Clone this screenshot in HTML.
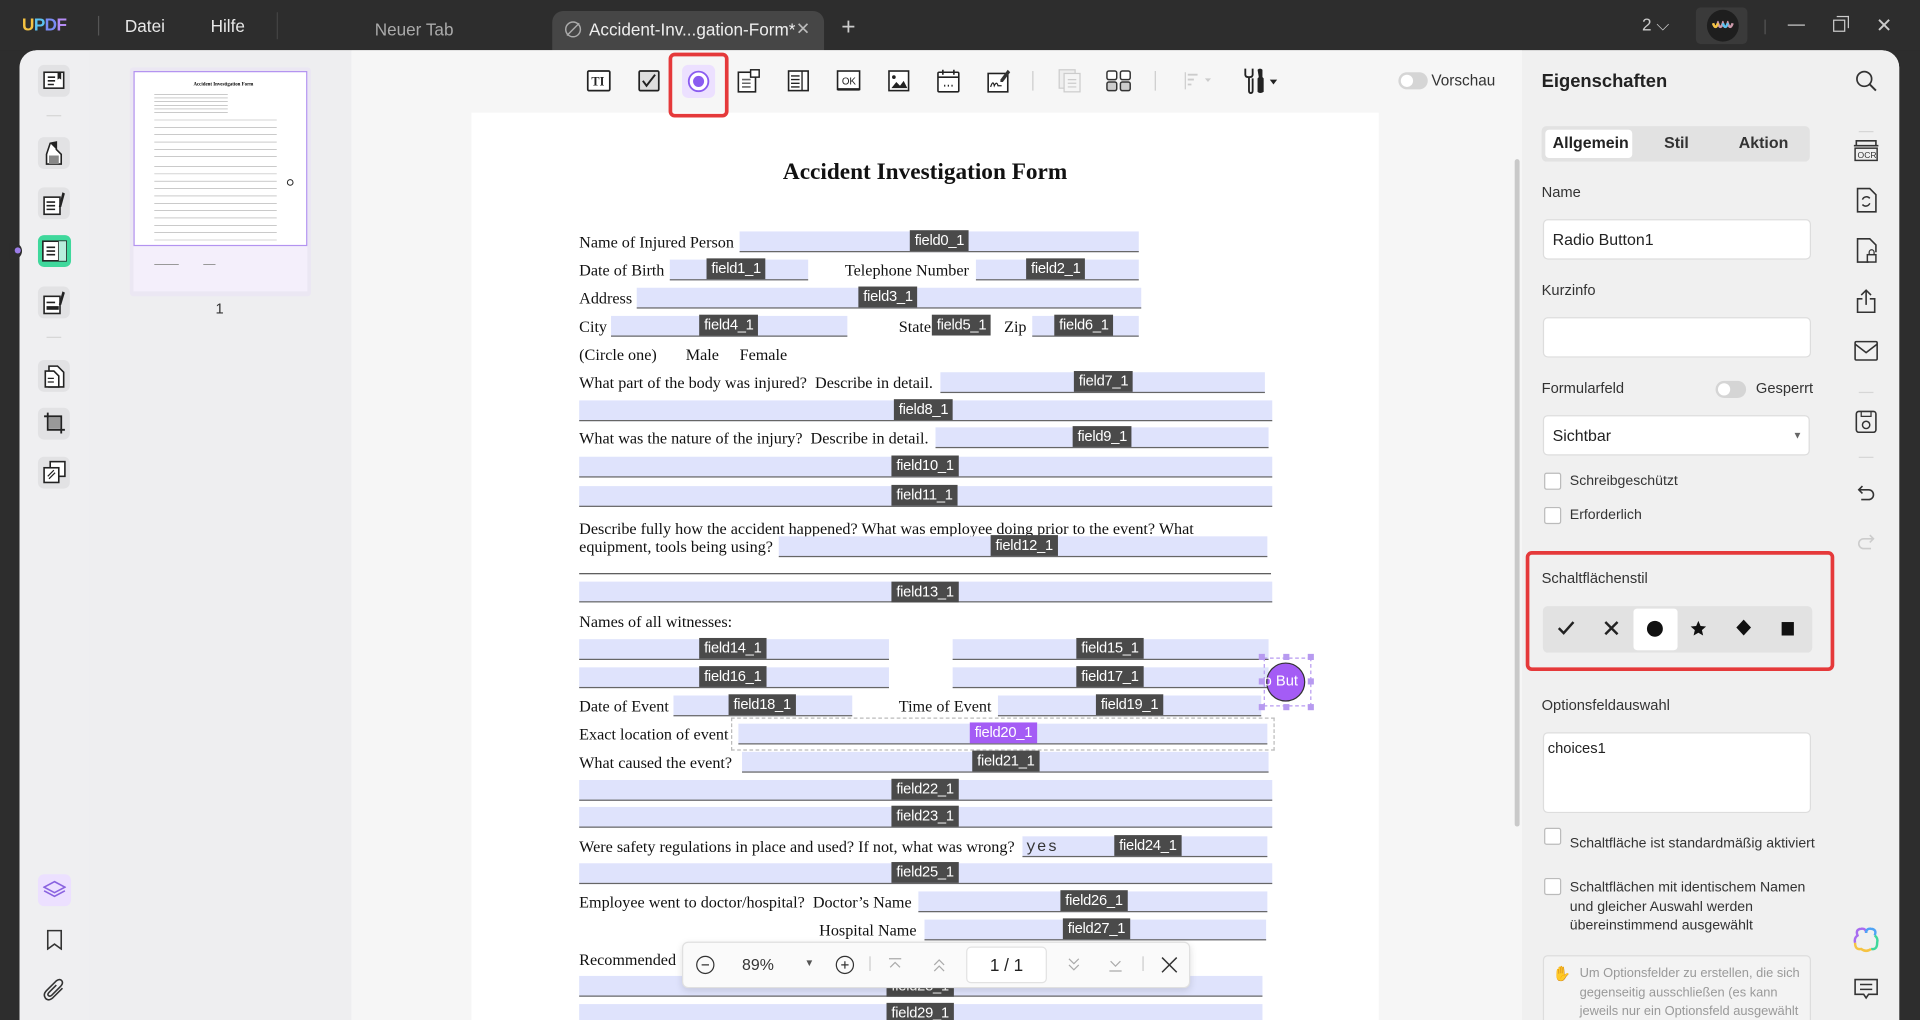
<!DOCTYPE html>
<html><head><meta charset="utf-8">
<style>
*{margin:0;padding:0;box-sizing:border-box}
html,body{width:1920px;height:1020px;overflow:hidden;background:#2d2d2d}
#w{position:absolute;left:0;top:0;width:1568px;height:833px;transform:scale(1.22449);transform-origin:0 0;font-family:"Liberation Sans","DejaVu Sans",sans-serif;overflow:hidden}
.a{position:absolute}
.tb{color:#e8e8e8;font-size:14px}
.f{position:absolute;height:17px;background:#dfe3fc;border-bottom:1px solid #666}
.l{position:absolute;height:17px;background:#4a4a4a;color:#fff;font-size:12px;line-height:17px;padding:0 4px;font-family:"Liberation Sans",sans-serif;letter-spacing:-0.2px}
.t{position:absolute;font-family:"Liberation Serif",serif;font-size:13.2px;line-height:16px;color:#111;white-space:nowrap}
.lb{position:absolute;font-size:12px;color:#333}
.cb{position:absolute;width:14px;height:14px;border:1px solid #bbb;border-radius:2px;background:#fff}
.inp{position:absolute;background:#fff;border:1px solid #ddd;border-radius:4px}
.li{position:absolute;left:31px;width:26px;height:26px;border-radius:5px;background:#e2e2e4}
.sep{position:absolute;background:#d6d6d6}
</style></head><body>
<div id="w">
<!-- title bar -->
<div class="a" style="left:0;top:0;width:1568px;height:41px;background:#2d2d2d"></div>
<div class="a" style="left:18px;top:12px;font-size:14px;font-weight:bold;letter-spacing:-0.5px"><span style="color:#f5c342">U</span><span style="color:#5cc1f0">P</span><span style="color:#7a8cf5">D</span><span style="color:#b58cf5">F</span></div>
<div class="a" style="left:80px;top:13px;width:1px;height:16px;background:#555"></div>
<div class="a tb" style="left:102px;top:13px">Datei</div>
<div class="a tb" style="left:172px;top:13px">Hilfe</div>
<div class="a" style="left:226px;top:10px;width:1px;height:22px;background:#444"></div>
<div class="a tb" style="left:306px;top:16px;color:#aaa">Neuer Tab</div>
<div class="a" style="left:451px;top:9px;width:222px;height:33px;background:#464646;border-radius:9px 9px 0 0"></div>
<svg class="a" style="left:460px;top:16px" width="16" height="16" viewBox="0 0 16 16"><circle cx="8" cy="8" r="6" fill="none" stroke="#aaa" stroke-width="1.2"/><path d="M3 13 L13 3" stroke="#aaa" stroke-width="1.2"/></svg>
<div class="a tb" style="left:481px;top:16px;color:#eee">Accident-Inv...gation-Form*</div>
<div class="a tb" style="left:650px;top:15px;color:#bbb">✕</div>
<div class="a" style="left:687px;top:11px;color:#ccc;font-size:20px">+</div>
<div class="a tb" style="left:1341px;top:12px;color:#ccc">2 ⌵</div>
<div class="a" style="left:1385px;top:6px;width:42px;height:30px;background:#3a3a3a;border-radius:4px"></div>
<div class="a" style="left:1394px;top:8px;width:26px;height:26px;background:#1e1e1e;border-radius:50%"></div>
<svg class="a" style="left:1398px;top:17px" width="18" height="8" viewBox="0 0 18 8"><path d="M1 2 Q3 8 5 2 Q7 8 9 2 Q11 8 13 2 Q15 8 17 2" fill="none" stroke="#c9a" stroke-width="2"/><path d="M1 2 Q3 8 5 2" fill="none" stroke="#f5c342" stroke-width="2"/><path d="M9 2 Q11 8 13 2" fill="none" stroke="#5cc1f0" stroke-width="2"/></svg>
<div class="a" style="left:1441px;top:16px;width:1px;height:12px;background:#555"></div>
<div class="a" style="left:1460px;top:20px;width:14px;height:1px;background:#ccc"></div>
<div class="a" style="left:1497px;top:16px;width:10px;height:10px;border:1px solid #ccc"></div>
<div class="a" style="left:1500px;top:13px;width:10px;height:10px;border-top:1px solid #ccc;border-right:1px solid #ccc"></div>
<div class="a tb" style="left:1532px;top:11px;color:#ccc;font-size:16px">✕</div>

<!-- main background -->
<div class="a" style="left:16px;top:41px;width:1535px;height:800px;background:#f3f3f3;border-radius:14px 14px 0 0"></div>
<div class="a" style="left:16px;top:41px;width:57px;height:800px;background:#efeff1;border-radius:14px 0 0 0"></div>
<div class="a" style="left:73px;top:41px;width:214px;height:800px;background:#eeeef0"></div>
<div class="a" style="left:287px;top:41px;width:956px;height:800px;background:#f6f6f6"></div>
<div class="a" style="left:1243px;top:41px;width:308px;height:800px;background:#f0f0f0;border-radius:0 14px 0 0"></div>
<div class="a" style="left:1237px;top:130px;width:4px;height:545px;background:#c9c9c9;border-radius:2px"></div>

<!-- left icons -->
<div class="a" style="left:8px;top:198px;width:10px;height:14px;background:#2d2d2d;border-radius:0 7px 7px 0"></div>
<div class="a" style="left:12px;top:202px;width:5px;height:5px;background:#9b7ce8;border-radius:50%"></div>
<div class="li" style="top:53px"></div>
<svg class="a" style="left:35px;top:57px" width="18" height="18" viewBox="0 0 18 18"><rect x="1" y="2" width="16" height="13" fill="#fff" stroke="#222" stroke-width="1.3"/><path d="M4 6h6M4 9h6M4 12h5" stroke="#222" stroke-width="1.3"/><path d="M12 2v6l1.5-1 1.5 1V2" fill="#222"/></svg>
<div class="sep" style="left:38px;top:94px;width:12px;height:1px"></div>
<div class="li" style="top:112px"></div>
<svg class="a" style="left:35px;top:115px" width="18" height="20" viewBox="0 0 18 20"><path d="M6 2 L11 1 L11 7 L15 11 L15 19 L3 19 L3 11 Z" fill="#fff" stroke="#222" stroke-width="1.3"/><path d="M6 2 L11 1 L11 7 Z" fill="#222"/><rect x="5" y="12" width="8" height="7" fill="#888"/></svg>
<div class="li" style="top:153px"></div>
<svg class="a" style="left:35px;top:156px" width="19" height="20" viewBox="0 0 19 20"><rect x="1" y="5" width="13" height="14" fill="#fff" stroke="#222" stroke-width="1.3"/><path d="M3 9h7M3 12h7M3 15h7" stroke="#222" stroke-width="1.3"/><path d="M16 1 L13 13 L15 13 L18 2Z" fill="#222"/></svg>
<div class="a" style="left:31px;top:192px;width:27px;height:26px;border-radius:5px;background:#3fd89c"></div>
<svg class="a" style="left:34px;top:196px" width="21" height="18" viewBox="0 0 21 18"><rect x="1" y="1" width="19" height="16" fill="#fff" stroke="#222" stroke-width="1.3"/><path d="M14 1v16" stroke="#222" stroke-width="1.3"/><rect x="14" y="1" width="6" height="16" fill="#b8eedc"/><path d="M4 6h7M4 9h7M4 12h7" stroke="#222" stroke-width="1.3"/></svg>
<div class="li" style="top:234px"></div>
<svg class="a" style="left:35px;top:237px" width="19" height="20" viewBox="0 0 19 20"><rect x="1" y="5" width="13" height="14" fill="#fff" stroke="#222" stroke-width="1.3"/><path d="M3 10h7" stroke="#222" stroke-width="1.3"/><rect x="3" y="13" width="10" height="3" fill="#222"/><path d="M16 1 L13 12 L15 12 L18 2Z" fill="#222"/></svg>
<div class="sep" style="left:38px;top:275px;width:12px;height:1px"></div>
<div class="li" style="top:294px"></div>
<svg class="a" style="left:35px;top:297px" width="19" height="20" viewBox="0 0 19 20"><path d="M5 2h7l5 5v12H5z" fill="#fff" stroke="#222" stroke-width="1.3"/><path d="M2 6h7l4 4v9H2z" fill="#fff" stroke="#222" stroke-width="1.3"/><path d="M4 12h5M4 15h5" stroke="#222"/></svg>
<div class="li" style="top:333px"></div>
<svg class="a" style="left:35px;top:336px" width="19" height="20" viewBox="0 0 19 20"><path d="M4 1v14h14M1 4h14v14" fill="none" stroke="#222" stroke-width="1.5"/><rect x="5" y="5" width="9" height="9" fill="#999"/></svg>
<div class="li" style="top:373px"></div>
<svg class="a" style="left:35px;top:376px" width="19" height="20" viewBox="0 0 19 20"><rect x="6" y="1" width="12" height="12" fill="#fff" stroke="#222" stroke-width="1.3"/><rect x="1" y="6" width="12" height="12" fill="#fff" stroke="#222" stroke-width="1.3"/><path d="M4 13l5-5M5 15l5-5" stroke="#222"/></svg>
<div class="a" style="left:31px;top:714px;width:27px;height:26px;border-radius:5px;background:#ece0ff"></div>
<svg class="a" style="left:35px;top:718px" width="19" height="18" viewBox="0 0 19 18"><path d="M9.5 2 L18 6.5 L9.5 11 L1 6.5Z M1 9.5 L9.5 14 L18 9.5" fill="none" stroke="#8a63e0" stroke-width="1.3"/></svg>
<svg class="a" style="left:37px;top:759px" width="15" height="17" viewBox="0 0 15 17"><path d="M2 1h11v15l-5.5-4L2 16z" fill="none" stroke="#333" stroke-width="1.3"/></svg>
<svg class="a" style="left:35px;top:799px" width="19" height="19" viewBox="0 0 19 19"><path d="M16 8 L8 16 Q4 19 2 16 Q0 13 3 10 L11 2 Q14 0 15.5 2 Q17 4 14 7 L7 14 Q5.5 15 4.5 14 Q3.5 13 5 11.5 L11 5.5" fill="none" stroke="#333" stroke-width="1.3"/></svg>

<!-- thumbnail -->
<div class="a" style="left:106px;top:55px;width:148px;height:187px;background:#ebe7f3;border-radius:3px"></div>
<div class="a" style="left:109px;top:58px;width:142px;height:180px;background:#f4effb"></div>
<div class="a" style="left:109px;top:58px;width:142px;height:143px;background:#fff;border:1px solid #b393f0"></div>
<div class="a" style="left:158px;top:66px;font-size:4px;font-family:'Liberation Serif',serif;font-weight:bold">Accident Investigation Form</div>
<svg class="a" style="left:110px;top:72px" width="140" height="150" viewBox="0 0 140 150">
<g stroke="#aaa" stroke-width="0.5">
<path d="M16 5h60M16 8h60M16 11h60M16 14h60M16 17h60M16 20h60M16 26h100M16 32h100M16 38h100M16 44h100M16 50h100M16 56h100M16 64h100M16 70h100M16 76h100M16 82h100M16 88h100M16 94h100M16 100h100M16 106h100M16 112h100M16 118h100M16 124h100"/></g>
<circle cx="127" cy="77" r="2.3" fill="none" stroke="#222" stroke-width="0.8"/>
<path d="M16 144h20M56 144h10" stroke="#999" stroke-width="0.8"/>
</svg>
<div class="a" style="left:176px;top:245px;font-size:12px;color:#333">1</div>

<!-- page -->
<div class="a" style="left:385px;top:92px;width:741px;height:760px;background:#fff"></div>

<!-- toolbar -->
<div class="a" style="left:557px;top:53px;width:27px;height:27px;background:#ece0ff;border-radius:5px"></div>
<div class="a" style="left:546px;top:43px;width:49px;height:53px;border:3px solid #e5393a;border-radius:5px"></div>
<svg class="a" style="left:479px;top:57px" width="20" height="18" viewBox="0 0 20 18"><rect x="1" y="1" width="18" height="16" rx="1" fill="#fff" stroke="#222" stroke-width="1.4"/><text x="4" y="13" font-family="Liberation Serif" font-weight="bold" font-size="10" fill="#222">TI</text></svg>
<svg class="a" style="left:521px;top:57px" width="18" height="18" viewBox="0 0 18 18"><rect x="1" y="1" width="16" height="16" rx="1" fill="#ddd" stroke="#222" stroke-width="1.4"/><path d="M4 9l3 4 7-9" fill="none" stroke="#222" stroke-width="1.6"/></svg>
<svg class="a" style="left:561px;top:57px" width="19" height="19" viewBox="0 0 19 19"><circle cx="9.5" cy="9.5" r="8" fill="#fff" stroke="#8a5cf0" stroke-width="1.5"/><circle cx="9.5" cy="9.5" r="4.5" fill="#8a5cf0"/></svg>
<svg class="a" style="left:602px;top:56px" width="20" height="20" viewBox="0 0 20 20"><rect x="1" y="3" width="14" height="16" fill="#fff" stroke="#222" stroke-width="1.3"/><rect x="11" y="1" width="7" height="6" fill="#fff" stroke="#222" stroke-width="1.2"/><path d="M4 9h7M4 12h7M4 15h7" stroke="#666" stroke-width="1.3"/></svg>
<svg class="a" style="left:643px;top:57px" width="18" height="18" viewBox="0 0 18 18"><rect x="1" y="1" width="16" height="16" fill="#fff" stroke="#222" stroke-width="1.3"/><path d="M12 1v16M3 5h7M3 8h7M3 11h7M3 14h7" stroke="#222" stroke-width="1.1"/></svg>
<svg class="a" style="left:683px;top:57px" width="20" height="18" viewBox="0 0 20 18"><rect x="1" y="1" width="18" height="15" fill="#fff" stroke="#222" stroke-width="1.3"/><path d="M1 16h18" stroke="#222" stroke-width="2"/><text x="4.5" y="12" font-size="8" font-family="Liberation Sans" fill="#222">OK</text></svg>
<svg class="a" style="left:725px;top:57px" width="18" height="18" viewBox="0 0 18 18"><rect x="1" y="1" width="16" height="16" fill="#fff" stroke="#222" stroke-width="1.3"/><circle cx="5" cy="6" r="1.5" fill="#222"/><path d="M3 15l4-5 3 3 3-4 3 6z" fill="#222"/></svg>
<svg class="a" style="left:765px;top:56px" width="19" height="20" viewBox="0 0 19 20"><rect x="1" y="3" width="17" height="16" rx="1" fill="#fff" stroke="#222" stroke-width="1.3"/><path d="M5 1v4M14 1v4M1 7h17" stroke="#222" stroke-width="1.3"/><path d="M6 14h1M9 14h1M12 14h1" stroke="#222" stroke-width="1.5"/></svg>
<svg class="a" style="left:806px;top:56px" width="20" height="20" viewBox="0 0 20 20"><rect x="1" y="4" width="16" height="15" fill="#fff" stroke="#222" stroke-width="1.3"/><path d="M3 15 Q5 9 6 14 Q8 10 9 14 L12 14" fill="none" stroke="#222"/><path d="M17 1 L19 3 L13 11 L11 11 L11 9Z" fill="#333"/></svg>
<div class="a" style="left:843px;top:58px;width:1px;height:16px;background:#ccc"></div>
<svg class="a" style="left:864px;top:56px" width="20" height="20" viewBox="0 0 20 20"><rect x="1" y="1" width="13" height="15" fill="#eee" stroke="#ccc"/><rect x="5" y="4" width="13" height="15" fill="#f5f5f5" stroke="#ccc"/><path d="M8 9h7M8 12h7M8 15h7" stroke="#ccc"/></svg>
<svg class="a" style="left:903px;top:57px" width="22" height="18" viewBox="0 0 22 18"><rect x="1" y="1" width="8" height="7" rx="1.5" fill="#fff" stroke="#333" stroke-width="1.2"/><rect x="12" y="1" width="8" height="7" rx="1.5" fill="#fff" stroke="#333" stroke-width="1.2"/><rect x="1" y="10" width="8" height="7" rx="1.5" fill="#ccc" stroke="#333" stroke-width="1.2"/><rect x="12" y="10" width="8" height="7" rx="1.5" fill="#ccc" stroke="#333" stroke-width="1.2"/></svg>
<div class="a" style="left:943px;top:58px;width:1px;height:16px;background:#ccc"></div>
<svg class="a" style="left:966px;top:58px" width="26" height="16" viewBox="0 0 26 16"><path d="M2 1v14" stroke="#ccc"/><path d="M4 3h8M4 7h5M4 11h3" stroke="#ccc" stroke-width="1.5"/><path d="M18 6h5l-2.5 3z" fill="#ccc"/></svg>
<svg class="a" style="left:1013px;top:55px" width="34" height="22" viewBox="0 0 34 22"><path d="M4 1 V6 Q4 8 7 8 Q10 8 10 6 V1 M7 8 V19 Q7 21 8.5 21 Q10 21 10 19 V9" fill="none" stroke="#222" stroke-width="1.5"/><path d="M14 2 Q16 0 18 2 V8 L19 9 V20 Q16 22 14 20 V9 L15 8Z" fill="#222"/><path d="M24 10h6l-3 4z" fill="#222"/></svg>
<div class="a" style="left:1142px;top:59px;width:24px;height:14px;border-radius:7px;background:#d5d5d5"></div>
<div class="a" style="left:1144px;top:61px;width:10px;height:10px;border-radius:50%;background:#fff"></div>
<div class="a" style="left:1169px;top:59px;font-size:12.5px;color:#333">Vorschau</div>

<div class="a" style="left:385px;top:130px;width:741px;text-align:center;font-family:'Liberation Serif',serif;font-weight:bold;font-size:19px;color:#111">Accident Investigation Form</div>

<div class="t" style="left:473px;top:190px">Name of Injured Person</div>
<div class="f" style="left:604px;top:189px;width:326px"></div><span class="l" style="left:743px;top:188px">field0_1</span>

<div class="t" style="left:473px;top:213px">Date of Birth</div>
<div class="f" style="left:547px;top:212px;width:113px"></div><span class="l" style="left:577px;top:211px">field1_1</span>
<div class="t" style="left:690px;top:213px">Telephone Number</div>
<div class="f" style="left:797px;top:212px;width:133px"></div><span class="l" style="left:838px;top:211px">field2_1</span>

<div class="t" style="left:473px;top:236px">Address</div>
<div class="f" style="left:520px;top:235px;width:412px"></div><span class="l" style="left:701px;top:234px">field3_1</span>

<div class="t" style="left:473px;top:259px">City</div>
<div class="f" style="left:499px;top:258px;width:193px"></div><span class="l" style="left:571px;top:257px">field4_1</span>
<div class="t" style="left:734px;top:259px">State</div>
<span class="l" style="left:761px;top:257px">field5_1</span>
<div class="t" style="left:820px;top:259px">Zip</div>
<div class="f" style="left:843px;top:258px;width:87px"></div><span class="l" style="left:861px;top:257px">field6_1</span>

<div class="t" style="left:473px;top:282px">(Circle one)</div>
<div class="t" style="left:560px;top:282px">Male</div>
<div class="t" style="left:604px;top:282px">Female</div>

<div class="t" style="left:473px;top:305px">What part of the body was injured?&nbsp; Describe in detail.</div>
<div class="f" style="left:768px;top:304px;width:265px"></div><span class="l" style="left:877px;top:303px">field7_1</span>

<div class="f" style="left:473px;top:327px;width:566px"></div><span class="l" style="left:730px;top:326px">field8_1</span>

<div class="t" style="left:473px;top:350px">What was the nature of the injury?&nbsp; Describe in detail.</div>
<div class="f" style="left:764px;top:349px;width:272px"></div><span class="l" style="left:876px;top:348px">field9_1</span>

<div class="f" style="left:473px;top:373px;width:566px"></div><span class="l" style="left:728px;top:372px">field10_1</span>
<div class="f" style="left:473px;top:397px;width:566px"></div><span class="l" style="left:728px;top:396px">field11_1</span>

<div class="t" style="left:473px;top:424px">Describe fully how the accident happened? What was employee doing prior to the event? What</div>
<div class="t" style="left:473px;top:439px">equipment, tools being using?</div>
<div class="f" style="left:636px;top:438px;width:399px"></div><span class="l" style="left:809px;top:437px">field12_1</span>
<div class="a" style="left:473px;top:468px;width:565px;height:1px;background:#555"></div>

<div class="f" style="left:473px;top:475px;width:566px"></div><span class="l" style="left:728px;top:475px">field13_1</span>

<div class="t" style="left:473px;top:500px">Names of all witnesses:</div>
<div class="f" style="left:473px;top:522px;width:253px"></div><span class="l" style="left:571px;top:521px">field14_1</span>
<div class="f" style="left:778px;top:522px;width:258px"></div><span class="l" style="left:879px;top:521px">field15_1</span>
<div class="f" style="left:473px;top:545px;width:253px"></div><span class="l" style="left:571px;top:544px">field16_1</span>
<div class="f" style="left:778px;top:545px;width:258px"></div><span class="l" style="left:879px;top:544px">field17_1</span>

<div class="t" style="left:473px;top:569px">Date of Event</div>
<div class="f" style="left:550px;top:568px;width:146px"></div><span class="l" style="left:595px;top:567px">field18_1</span>
<div class="t" style="left:734px;top:569px">Time of Event</div>
<div class="f" style="left:815px;top:568px;width:215px"></div><span class="l" style="left:895px;top:567px">field19_1</span>

<div class="t" style="left:473px;top:592px">Exact location of event</div>
<div class="f" style="left:603px;top:591px;width:432px"></div><span class="l" style="left:792px;top:590px;background:#a45cf5">field20_1</span>
<div class="a" style="left:597px;top:586px;width:444px;height:27px;border:1px dashed #bbb"></div>

<div class="t" style="left:473px;top:615px">What caused the event?</div>
<div class="f" style="left:606px;top:614px;width:430px"></div><span class="l" style="left:794px;top:613px">field21_1</span>

<div class="f" style="left:473px;top:637px;width:566px"></div><span class="l" style="left:728px;top:636px">field22_1</span>
<div class="f" style="left:473px;top:659px;width:566px"></div><span class="l" style="left:728px;top:658px">field23_1</span>

<div class="t" style="left:473px;top:684px">Were safety regulations in place and used? If not, what was wrong?</div>
<div class="f" style="left:835px;top:683px;width:200px"></div>
<div class="a" style="left:838px;top:684px;font-family:'Liberation Mono',monospace;font-size:13px;color:#333;letter-spacing:1px">yes</div>
<span class="l" style="left:910px;top:682px">field24_1</span>

<div class="f" style="left:473px;top:705px;width:566px"></div><span class="l" style="left:728px;top:704px">field25_1</span>

<div class="t" style="left:473px;top:729px">Employee went to doctor/hospital?&nbsp; Doctor’s Name</div>
<div class="f" style="left:750px;top:728px;width:285px"></div><span class="l" style="left:866px;top:727px">field26_1</span>
<div class="t" style="left:669px;top:752px">Hospital Name</div>
<div class="f" style="left:755px;top:751px;width:279px"></div><span class="l" style="left:868px;top:750px">field27_1</span>

<div class="t" style="left:473px;top:776px">Recommended</div>
<div class="f" style="left:473px;top:797px;width:558px"></div><span class="l" style="left:724px;top:797px">field28_1</span>
<div class="f" style="left:473px;top:820px;width:558px"></div><span class="l" style="left:724px;top:819px">field29_1</span>

<!-- radio widget -->
<div class="a" style="left:1032px;top:537px;width:39px;height:40px;border:1px dashed #b79af0"></div>
<div class="a" style="left:1034px;top:541px;width:32px;height:32px;border-radius:50%;background:#a45cf5;border:1px solid #333"></div>
<div class="a" style="left:1032px;top:549px;font-size:12px;color:#fff;width:38px;overflow:hidden;white-space:nowrap">o But</div>
<div class="a" style="left:1028px;top:534px;width:5px;height:5px;background:#b79af0"></div>
<div class="a" style="left:1048px;top:534px;width:5px;height:5px;background:#b79af0"></div>
<div class="a" style="left:1068px;top:534px;width:5px;height:5px;background:#b79af0"></div>
<div class="a" style="left:1028px;top:554px;width:5px;height:5px;background:#b79af0"></div>
<div class="a" style="left:1068px;top:554px;width:5px;height:5px;background:#b79af0"></div>
<div class="a" style="left:1028px;top:575px;width:5px;height:5px;background:#b79af0"></div>
<div class="a" style="left:1048px;top:575px;width:5px;height:5px;background:#b79af0"></div>
<div class="a" style="left:1068px;top:575px;width:5px;height:5px;background:#b79af0"></div>

<!-- zoom bar -->
<div class="a" style="left:557px;top:769px;width:415px;height:38px;background:#fafafa;border:1px solid #e0e0e0;border-radius:5px;box-shadow:0 2px 6px rgba(0,0,0,.12)"></div>
<svg class="a" style="left:568px;top:780px" width="16" height="16" viewBox="0 0 16 16"><circle cx="8" cy="8" r="7" fill="none" stroke="#333"/><path d="M5 8h6" stroke="#333"/></svg>
<div class="a" style="left:606px;top:780px;font-size:13px;color:#333">89%</div>
<div class="a" style="left:657px;top:782px;font-size:8px;color:#555">▼</div>
<svg class="a" style="left:682px;top:780px" width="16" height="16" viewBox="0 0 16 16"><circle cx="8" cy="8" r="7" fill="none" stroke="#333"/><path d="M5 8h6M8 5v6" stroke="#333"/></svg>
<div class="a" style="left:710px;top:781px;width:1px;height:12px;background:#ccc"></div>
<svg class="a" style="left:724px;top:781px" width="14" height="14" viewBox="0 0 14 14"><path d="M2 2h10M3 9l4-4 4 4" fill="none" stroke="#aaa"/></svg>
<svg class="a" style="left:760px;top:780px" width="14" height="16" viewBox="0 0 14 16"><path d="M3 8l4-4 4 4M3 13l4-4 4 4" fill="none" stroke="#aaa"/></svg>
<div class="a" style="left:789px;top:773px;width:66px;height:30px;background:#fff;border:1px solid #e2e2e2;border-radius:4px;font-size:14px;text-align:center;line-height:28px;color:#222">1 / 1</div>
<svg class="a" style="left:870px;top:780px" width="14" height="16" viewBox="0 0 14 16"><path d="M3 3l4 4 4-4M3 8l4 4 4-4" fill="none" stroke="#aaa"/></svg>
<svg class="a" style="left:904px;top:781px" width="14" height="14" viewBox="0 0 14 14"><path d="M3 4l4 4 4-4M2 12h10" fill="none" stroke="#aaa"/></svg>
<div class="a" style="left:933px;top:781px;width:1px;height:12px;background:#ccc"></div>
<svg class="a" style="left:948px;top:781px" width="14" height="14" viewBox="0 0 14 14"><path d="M1 1l12 12M13 1L1 13" stroke="#333" stroke-width="1.2"/></svg>

<!-- right panel -->
<div class="a" style="left:1259px;top:58px;font-size:15px;font-weight:bold;color:#222">Eigenschaften</div>
<div class="a" style="left:1259px;top:103px;width:219px;height:29px;background:#e2e2e2;border-radius:4px"></div>
<div class="a" style="left:1262px;top:106px;width:71px;height:23px;background:#fff;border-radius:3px"></div>
<div class="a" style="left:1268px;top:109px;font-size:13px;font-weight:bold;color:#222">Allgemein</div>
<div class="a" style="left:1359px;top:109px;font-size:13px;font-weight:bold;color:#333">Stil</div>
<div class="a" style="left:1420px;top:109px;font-size:13px;font-weight:bold;color:#333">Aktion</div>
<div class="lb" style="left:1259px;top:150px">Name</div>
<div class="inp" style="left:1260px;top:179px;width:219px;height:33px"></div>
<div class="a" style="left:1268px;top:188px;font-size:13px;color:#222">Radio Button1</div>
<div class="lb" style="left:1259px;top:230px">Kurzinfo</div>
<div class="inp" style="left:1260px;top:259px;width:219px;height:33px"></div>
<div class="lb" style="left:1259px;top:310px">Formularfeld</div>
<div class="a" style="left:1401px;top:311px;width:25px;height:14px;border-radius:7px;background:#d5d5d5"></div>
<div class="a" style="left:1403px;top:313px;width:10px;height:10px;border-radius:50%;background:#fff"></div>
<div class="lb" style="left:1434px;top:310px">Gesperrt</div>
<div class="inp" style="left:1260px;top:339px;width:218px;height:33px"></div>
<div class="a" style="left:1268px;top:348px;font-size:13px;color:#222">Sichtbar</div>
<div class="a" style="left:1464px;top:351px;font-size:8px;color:#666">▼</div>
<div class="cb" style="left:1261px;top:386px"></div>
<div class="lb" style="left:1282px;top:387px;font-size:11.5px">Schreibgeschützt</div>
<div class="cb" style="left:1261px;top:414px"></div>
<div class="lb" style="left:1282px;top:415px;font-size:11.5px">Erforderlich</div>
<div class="a" style="left:1246px;top:450px;width:252px;height:98px;border:3px solid #e5393a;border-radius:5px"></div>
<div class="lb" style="left:1259px;top:465px">Schaltflächenstil</div>
<div class="a" style="left:1260px;top:495px;width:220px;height:38px;background:#e2e2e2;border-radius:4px"></div>
<div class="a" style="left:1334px;top:497px;width:36px;height:34px;background:#fff;border-radius:3px"></div>
<svg class="a" style="left:1271px;top:505px" width="16" height="16" viewBox="0 0 16 16"><path d="M2 8l4 4 8-9" fill="none" stroke="#222" stroke-width="2"/></svg>
<svg class="a" style="left:1309px;top:506px" width="14" height="14" viewBox="0 0 14 14"><path d="M2 2l10 10M12 2L2 12" stroke="#222" stroke-width="2"/></svg>
<div class="a" style="left:1345px;top:507px;width:13px;height:13px;border-radius:50%;background:#111"></div>
<svg class="a" style="left:1380px;top:506px" width="14" height="14" viewBox="0 0 14 14"><path d="M7 1l1.8 4.2 4.5.4-3.4 3 1 4.4L7 10.7 3.1 13l1-4.4-3.4-3 4.5-.4z" fill="#111"/></svg>
<svg class="a" style="left:1417px;top:505px" width="14" height="15" viewBox="0 0 14 15"><path d="M7 1l6 6.5-6 6.5-6-6.5z" fill="#111"/></svg>
<div class="a" style="left:1455px;top:508px;width:10px;height:11px;background:#111"></div>
<div class="lb" style="left:1259px;top:569px">Optionsfeldauswahl</div>
<div class="inp" style="left:1260px;top:598px;width:219px;height:66px"></div>
<div class="a" style="left:1264px;top:604px;font-size:12px;color:#222">choices1</div>
<div class="cb" style="left:1261px;top:676px"></div>
<div class="lb" style="left:1282px;top:683px;font-size:11.5px">Schaltfläche ist standardmäßig aktiviert</div>
<div class="cb" style="left:1261px;top:717px"></div>
<div class="lb" style="left:1282px;top:718px;font-size:11.5px;line-height:15.5px">Schaltflächen mit identischem Namen<br>und gleicher Auswahl werden<br>übereinstimmend ausgewählt</div>
<div class="a" style="left:1260px;top:780px;width:219px;height:70px;border:1px solid #ddd;border-radius:4px;background:#f3f3f3"></div>
<div class="a" style="left:1268px;top:788px;font-size:12px;color:#e8a93a">✋</div>
<div class="a" style="left:1290px;top:788px;font-size:10.5px;line-height:15.5px;color:#999">Um Optionsfelder zu erstellen, die sich<br>gegenseitig ausschließen (es kann<br>jeweils nur ein Optionsfeld ausgewählt<br>werden), müssen die Felder denselben</div>

<!-- right icons -->
<svg class="a" style="left:1515px;top:57px" width="18" height="18" viewBox="0 0 18 18"><circle cx="7.5" cy="7.5" r="6" fill="none" stroke="#333" stroke-width="1.4"/><path d="M12 12l5 5" stroke="#333" stroke-width="1.6"/></svg>
<div class="sep" style="left:1518px;top:107px;width:12px;height:1px"></div>
<svg class="a" style="left:1513px;top:113px" width="22" height="20" viewBox="0 0 22 20"><path d="M3 6V2h16v4" fill="none" stroke="#333" stroke-width="1.3"/><path d="M1 6h20" stroke="#333" stroke-width="1.3"/><rect x="2" y="8" width="18" height="10" fill="none" stroke="#333" stroke-width="1.2"/><text x="4" y="16" font-size="7" font-family="Liberation Sans" fill="#333">OCR</text></svg>
<svg class="a" style="left:1515px;top:153px" width="18" height="21" viewBox="0 0 18 21"><path d="M2 1h10l5 5v14H2z" fill="none" stroke="#333" stroke-width="1.3"/><path d="M6 10a3.5 3.5 0 0 1 6 -1M12 13a3.5 3.5 0 0 1-6 1" fill="none" stroke="#333" stroke-width="1.2"/></svg>
<svg class="a" style="left:1515px;top:194px" width="18" height="21" viewBox="0 0 18 21"><path d="M11 20H2V1h10l5 5v6" fill="none" stroke="#333" stroke-width="1.3"/><rect x="10" y="14" width="7" height="6" fill="none" stroke="#333" stroke-width="1.2"/><path d="M11.5 14v-2a2 2 0 0 1 4 0v2" fill="none" stroke="#333"/></svg>
<svg class="a" style="left:1515px;top:236px" width="18" height="20" viewBox="0 0 18 20"><path d="M6 8H2v11h14V8h-4M9 13V1M5 5l4-4 4 4" fill="none" stroke="#333" stroke-width="1.3"/></svg>
<svg class="a" style="left:1514px;top:278px" width="20" height="17" viewBox="0 0 20 17"><rect x="1" y="1" width="18" height="15" rx="1" fill="none" stroke="#333" stroke-width="1.3"/><path d="M1 3l9 7 9-7" fill="none" stroke="#333" stroke-width="1.3"/></svg>
<div class="sep" style="left:1518px;top:320px;width:12px;height:1px"></div>
<svg class="a" style="left:1515px;top:335px" width="18" height="19" viewBox="0 0 18 19"><rect x="1" y="1" width="16" height="17" rx="2" fill="none" stroke="#333" stroke-width="1.3"/><path d="M5 1v4h8V1" fill="none" stroke="#333"/><circle cx="9" cy="12" r="3" fill="none" stroke="#333" stroke-width="1.2"/></svg>
<div class="sep" style="left:1518px;top:373px;width:12px;height:1px"></div>
<svg class="a" style="left:1516px;top:395px" width="16" height="16" viewBox="0 0 16 16"><path d="M5 2L2 5l3 3M2 5h8a4 4 0 0 1 0 8H4" fill="none" stroke="#333" stroke-width="1.3"/></svg>
<svg class="a" style="left:1516px;top:435px" width="16" height="16" viewBox="0 0 16 16"><path d="M11 2l3 3-3 3M14 5H6a4 4 0 0 0 0 8h6" fill="none" stroke="#ccc" stroke-width="1.3"/></svg>
<svg class="a" style="left:1513px;top:757px" width="22" height="22" viewBox="0 0 22 22"><path d="M11 5 Q11 1 7 1.5 Q2 2 4 7 Q1 9 2 13" fill="none" stroke="#a86cf0" stroke-width="2"/><path d="M11 5 Q11 1 15 1.5 Q20 2 18 7" fill="none" stroke="#4fa3f5" stroke-width="2"/><path d="M18 7 Q21 9 20 13 Q20 19 15 18" fill="none" stroke="#3fd89c" stroke-width="2"/><path d="M2 13 Q2 19 7 18 Q11 21 15 18" fill="none" stroke="#f5c342" stroke-width="2"/></svg>
<svg class="a" style="left:1514px;top:799px" width="20" height="19" viewBox="0 0 20 19"><path d="M1 1h18v12h-7l-2 3-2-3H1z" fill="none" stroke="#333" stroke-width="1.3"/><path d="M5 5h10M5 9h10" stroke="#333" stroke-width="1.2"/></svg>
</div>
</body></html>
